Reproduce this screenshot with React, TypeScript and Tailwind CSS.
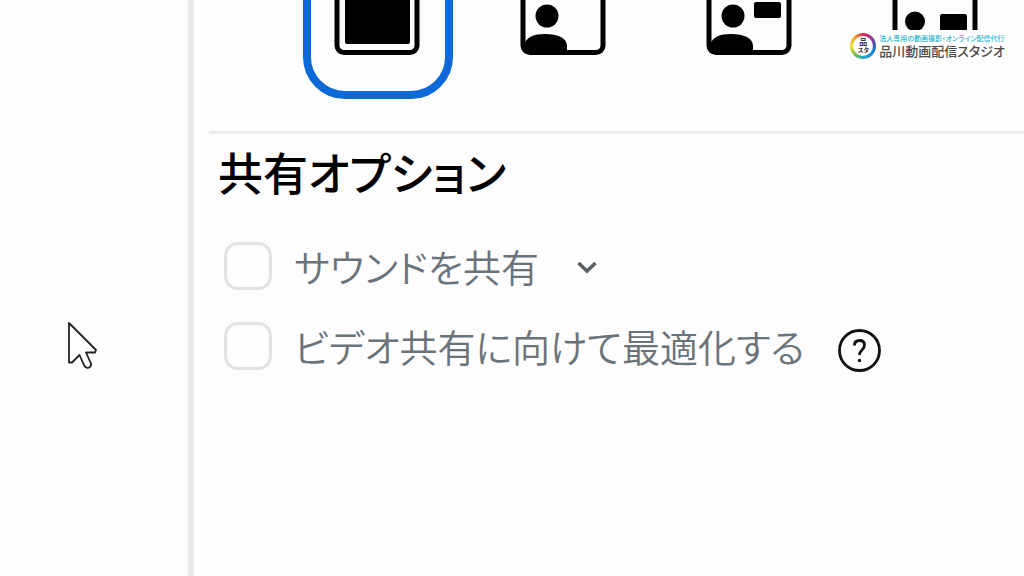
import type { ReactNode } from "react";

function Frame({ children }: { children: ReactNode }) {
  return (
    <svg viewBox="0 0 86 70" className="h-[70px] w-[86px]" aria-hidden="true">
      <rect x="3" y="3" width="80" height="64.500" rx="7" fill="#fdfdfd" stroke="#000" strokeWidth="5" />
      {children}
    </svg>
  );
}

const shoulders = "M4 66 V60 C6 52 14 49 25 49 C38 49 47 53 47 61 V67 H8 Z";

const layouts = [
  {
    label: "画面のみ",
    selected: true,
    art: <rect x="11" y="12" width="65" height="47" rx="2" />,
  },
  {
    label: "人物を手前に表示",
    selected: false,
    art: (
      <>
        <circle cx="27" cy="31" r="11.5" />
        <path d={shoulders} />
      </>
    ),
  },
  {
    label: "人物と画面を並べて表示",
    selected: false,
    art: (
      <>
        <circle cx="27" cy="31" r="11.5" />
        <path d={shoulders} />
        <rect x="48" y="17" width="27" height="16" rx="2" />
      </>
    ),
  },
  {
    label: "肩越しに表示",
    selected: false,
    art: (
      <>
        <circle cx="23" cy="36.5" r="10" />
        <path d="M6 67 C6 56 13 53 24 53 C36 53 42 56 42 67 Z" />
        <rect x="48" y="29" width="27" height="17" rx="2" />
      </>
    ),
  },
];

function LayoutPicker() {
  return (
    <div className="flex h-[99px] items-end gap-9 overflow-hidden pl-[109px]">
      {layouts.map((item) => (
        <button
          key={item.label}
          type="button"
          aria-label={item.label}
          aria-pressed={item.selected}
          className={
            item.selected
              ? "flex h-[158px] w-[150px] shrink-0 items-center justify-center rounded-[42px] border-8 border-[#0d68d8] pr-0.5"
              : "flex h-[158px] w-[150px] shrink-0 items-center justify-center rounded-[42px] border-8 border-transparent pr-0.5"
          }
        >
          <Frame>{item.art}</Frame>
        </button>
      ))}
    </div>
  );
}

function Option({ id, label, children }: { id: string; label: string; children: ReactNode }) {
  return (
    <div className="flex h-20 items-center">
      <input
        id={id}
        type="checkbox"
        className="size-12 shrink-0 appearance-none rounded-[14px] border-3 border-[#e0e3e3] bg-[#fdfdfd] checked:bg-[#0d68d8]"
      />
      <label htmlFor={id} className="shrink-0 pl-[22px] text-[38px] leading-[60px] font-[350] whitespace-nowrap text-[#6a7379]">
        {label}
      </label>
      {children}
    </div>
  );
}

function StudioLogo() {
  return (
    <div className="absolute top-[30px] right-3 flex items-center gap-[3px] bg-[#fefefe] py-[3px] pr-[7px] pl-1">
      <div className="flex size-[26px] items-center justify-center rounded-full bg-[conic-gradient(#e0245e,#7b3fa0_60deg,#1f6fc0_100deg,#1ea5dc_170deg,#5cba4b_215deg,#f0e02c_270deg,#f4a324_315deg,#e0245e)]">
        <div className="flex size-5 flex-col items-center justify-center rounded-full bg-white text-[#333]">
          <span className="text-[8px] leading-[8px] font-bold">品</span>
          <span className="text-[6px] leading-[8px] font-bold">スタ</span>
        </div>
      </div>
      <div className="whitespace-nowrap">
        <p className="text-[7px] leading-[10px] font-medium text-[#2fb4d0]">法人専用の動画撮影・オンライン配信代行</p>
        <p className="text-[13px] leading-4 font-medium text-[#4a4a4a]">品川動画配信スタジオ</p>
      </div>
    </div>
  );
}

function Pointer() {
  return (
    <svg viewBox="0 0 32 50" className="absolute top-[321px] left-[67px] h-[50px] w-8" aria-hidden="true">
      <path
        d="M2 2 V41.500 L5 41.500 L12.500 34 L17 44 Q19.500 48.500 23 46 Q25 44.500 23.500 41.500 L19 31.500 H28 L29 29 Z"
        fill="#fff"
        stroke="#222"
        strokeWidth="1.800"
        strokeLinejoin="round"
      />
    </svg>
  );
}

export default function App() {
  return (
    <div className="relative flex min-h-screen overflow-hidden bg-[#fdfdfd] font-['Noto_Sans_CJK_JP',sans-serif] [font-feature-settings:'palt']">
      <aside className="w-[194px] shrink-0 border-r-6 border-[#e9ebeb]" />
      <main className="min-w-0 flex-1">
        <LayoutPicker />
        <section className="mt-8 ml-[15px] border-t-3 border-[#ededed] pl-[15px]">
          <h1 className="-ml-[6px] pt-1 text-[45px] leading-[68px] font-medium text-black">共有オプション</h1>
          <div className="pt-5">
            <Option id="share-sound" label="サウンドを共有">
              <button type="button" aria-label="サウンドの設定" className="ml-8 flex size-8 items-center justify-center">
                <svg viewBox="0 0 24 24" className="size-6" fill="none" stroke="#5b6064" strokeWidth="3.500" aria-hidden="true">
                  <path d="M3.500 9 L12 17 L20.500 9" />
                </svg>
              </button>
            </Option>
            <Option id="optimize-video" label="ビデオ共有に向けて最適化する">
              <button type="button" aria-label="ヘルプ" className="ml-8 pt-2">
                <svg viewBox="0 0 46 46" className="size-[46px]" fill="none" stroke="#111" aria-hidden="true">
                  <circle cx="22.500" cy="23.500" r="20" strokeWidth="2.800" />
                  <path d="M17.500 18.500 Q17.500 13.500 22.500 13.500 Q27.500 13.500 27.500 18 Q27.500 20.500 25 23 Q22.500 25 22.500 28" strokeWidth="2.800" />
                  <circle cx="22.500" cy="33.500" r="1.700" fill="#111" stroke="none" />
                </svg>
              </button>
            </Option>
          </div>
        </section>
      </main>
      <StudioLogo />
      <Pointer />
    </div>
  );
}
